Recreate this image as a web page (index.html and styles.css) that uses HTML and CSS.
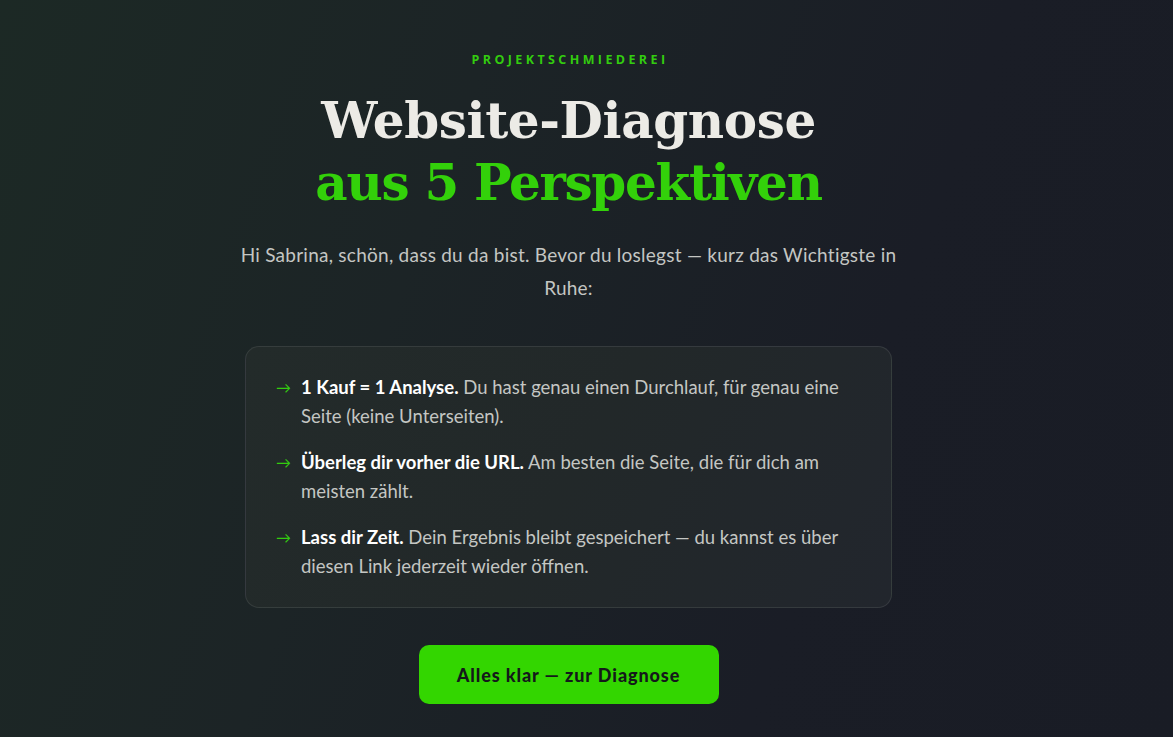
FILE: index.html
```html
<!DOCTYPE html>
<html lang="de">
<head>
<meta charset="utf-8">
<title>Website-Diagnose</title>
<link rel="stylesheet" href="styles.css">
</head>
<body>
<main class="page">
  <div class="eyebrow">PROJEKTSCHMIEDEREI</div>
  <h1 class="title">Website-Diagnose<br><span class="accent">aus 5 Perspektiven</span></h1>
  <p class="intro">Hi Sabrina, schön, dass du da bist. Bevor du loslegst — kurz das Wichtigste in Ruhe:</p>
  <section class="card">
    <ul class="list">
      <li><span class="arrow">→</span><span class="txt"><strong>1 Kauf = 1 Analyse.</strong> Du hast genau einen Durchlauf, für genau eine Seite (keine Unterseiten).</span></li>
      <li><span class="arrow">→</span><span class="txt"><strong>Überleg dir vorher die URL.</strong> Am besten die Seite, die für dich am meisten zählt.</span></li>
      <li><span class="arrow">→</span><span class="txt"><strong>Lass dir Zeit.</strong> Dein Ergebnis bleibt gespeichert — du kannst es über diesen Link jederzeit wieder öffnen.</span></li>
    </ul>
  </section>
  <button class="cta">Alles klar — zur Diagnose</button>
</main>
</body>
</html>
```

FILE: styles.css
```css
html, body {
  margin: 0;
  height: 100%;
}
body {
  background: linear-gradient(110deg, #1c2925 0%, #1c2426 35%, #1a1d26 70%, #191c25 100%);
  color: #c9ccc9;
  font-family: Lato, "Open Sans", sans-serif;
  overflow: hidden;
}
.page {
  display: flex;
  flex-direction: column;
  align-items: center;
  padding-top: 52px;
  padding-right: 36px;
}
.eyebrow {
  font-family: "Open Sans", sans-serif;
  font-weight: 700;
  font-size: 12.5px;
  letter-spacing: 3.4px;
  color: #33cc0f;
  line-height: 16px;
  padding-left: 3px;
}
.title {
  margin: 22px 0 0;
  font-family: "DejaVu Serif", Georgia, serif;
  font-weight: 700;
  font-size: 50px;
  line-height: 62px;
  text-align: center;
  color: #ecebe6;
  letter-spacing: -0.4px;
}
.title .accent {
  color: #33d10a;
  letter-spacing: -1.3px;
}
.intro {
  margin: 24px 0 0;
  width: 680px;
  text-align: center;
  font-size: 19px;
  letter-spacing: 0.25px;
  line-height: 33px;
  color: #c4c6c3;
}
.card {
  margin-top: 42px;
  width: 647px;
  box-sizing: border-box;
  border: 1px solid rgba(255,255,255,0.09);
  border-radius: 14px;
  background: linear-gradient(120deg, #232b2a 0%, #222829 50%, #22262d 100%);
  padding: 26px 30px 26px;
}
.list {
  list-style: none;
  margin: 0;
  padding: 0;
  display: flex;
  flex-direction: column;
  gap: 17px;
}
.list li {
  display: flex;
  gap: 10px;
  font-size: 18.5px;
  line-height: 29px;
  color: #c4c6c3;
}
.arrow {
  color: #33cc0f;
  flex: none;
  width: 15px;
  font-size: 15px;
}
.txt strong {
  color: #ffffff;
  font-weight: 700;
}
.cta {
  margin-top: 37px;
  width: 300px;
  height: 59px;
  border: none;
  border-radius: 10px;
  background: #33d600;
  color: #14191a;
  font-family: Lato, sans-serif;
  font-weight: 900;
  font-size: 18px;
  letter-spacing: 0.9px;
}
```
